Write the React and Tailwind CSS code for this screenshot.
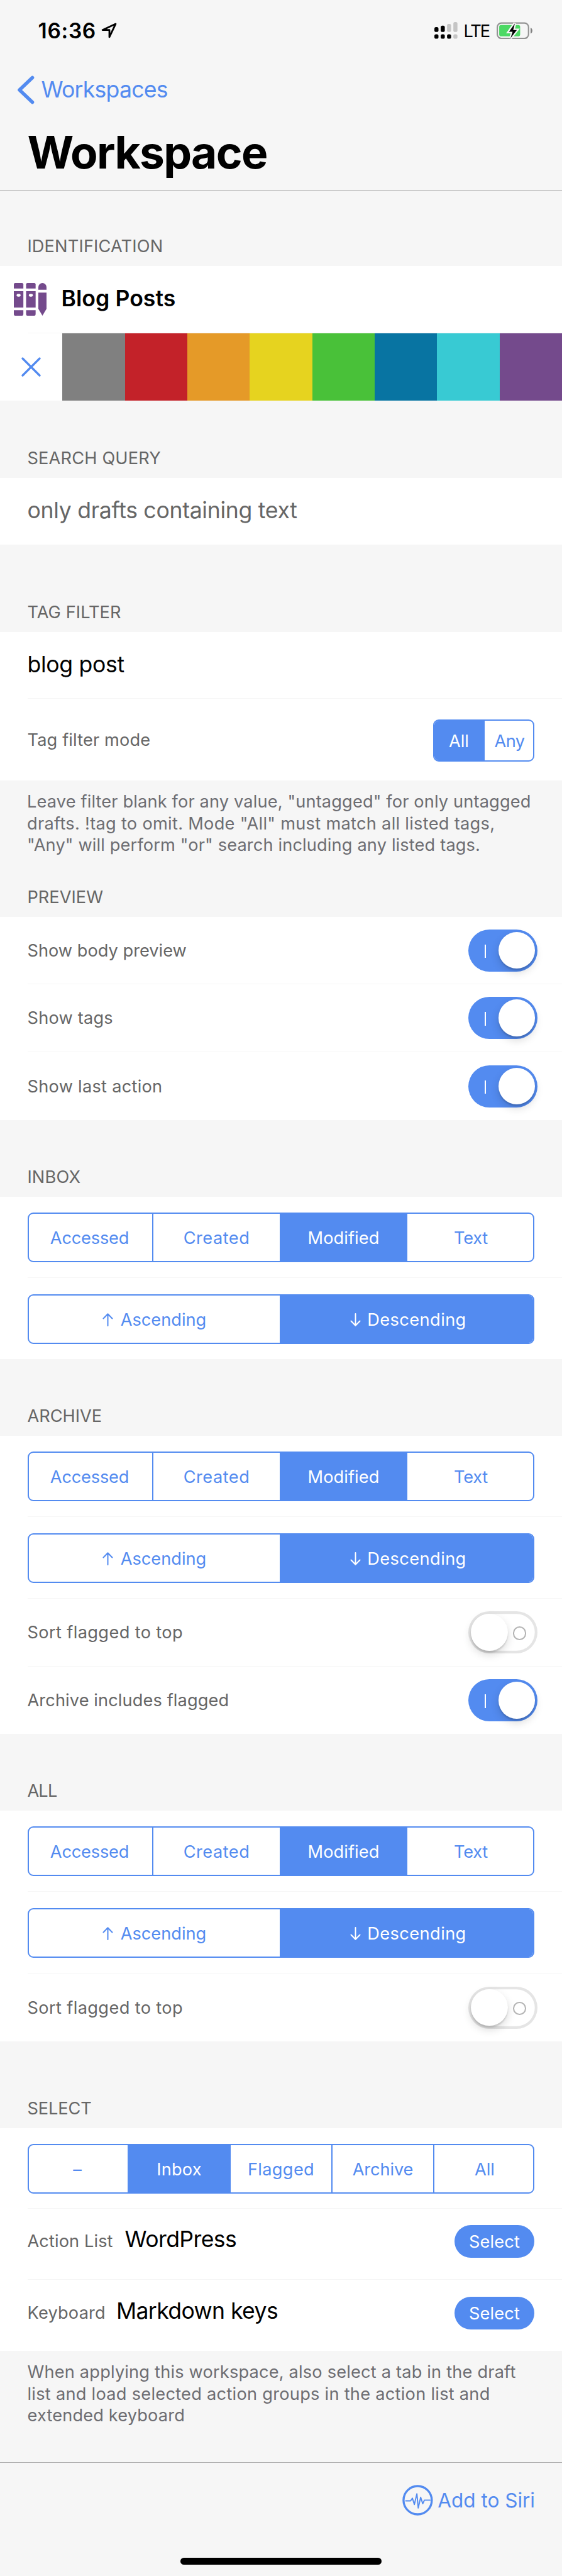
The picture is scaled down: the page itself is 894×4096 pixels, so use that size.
import React from "react";

const SWATCHES = [
  "bg-[#808080]",
  "bg-[#c32229]",
  "bg-[#e59a28]",
  "bg-[#e6d31f]",
  "bg-[#49c139]",
  "bg-[#0874a2]",
  "bg-[#38cad3]",
  "bg-[#744a8c]",
];

function LocationArrow() {
  return (
    <svg className="h-[25px] w-[25px]" viewBox="0 0 24 24" fill="none" stroke="black" strokeWidth="2.7" strokeLinejoin="round">
      <path d="M22 2 L2 11.200 H12.500 V22 Z" />
    </svg>
  );
}

function SignalDots() {
  return (
    <svg className="h-[26.6px] w-[36.7px]" viewBox="60 114 153 111">
      <g fill="#000">
        <rect x="60" y="147" width="27" height="33" rx="11" />
        <rect x="102" y="138" width="27" height="42" rx="11" />
        <rect x="60" y="195" width="27" height="30" rx="11" />
        <rect x="102" y="195" width="27" height="30" rx="11" />
        <rect x="144" y="195" width="27" height="30" rx="11" />
      </g>
      <g fill="#c5c5c5">
        <rect x="144" y="126" width="27" height="54" rx="11" />
        <rect x="186" y="114" width="27" height="66" rx="11" />
        <rect x="186" y="195" width="27" height="30" rx="11" />
      </g>
    </svg>
  );
}

function Battery() {
  return (
    <svg className="h-[27.6px] w-[57.6px]" viewBox="474 115 240 115">
      <rect x="478.500" y="121.500" width="207" height="102" rx="27" fill="none" stroke="#939393" strokeWidth="9" />
      <rect x="491" y="135" width="139" height="75" rx="13" fill="#4cd964" />
      <path d="M699 152 Q711 158 711 172.500 Q711 187 699 192 Z" fill="#808080" />
      <path d="M595 124 L555 180 H580 L566 222 L608 168 H584 Z" fill="#f6f6f6" stroke="#f6f6f6" strokeWidth="19" />
      <path d="M595 124 L556 180 H580 L566 222 L608 168 H584 Z" fill="#000" />
    </svg>
  );
}

function NotebooksIcon() {
  return (
    <svg className="h-[52px] w-[52px]" viewBox="33 42 216 216">
      <g fill="#744a8c">
        <path d="M33 78 V51 Q33 42 42 42 H87 Q96 42 96 51 V78 Z" />
        <rect x="33" y="96" width="63" height="108" />
        <path d="M33 222 V249 Q33 258 42 258 H87 Q96 258 96 249 V222 Z" />
        <path d="M114 78 V51 Q114 42 123 42 H168 Q177 42 177 51 V78 Z" />
        <rect x="114" y="96" width="63" height="108" />
        <path d="M114 222 V249 Q114 258 123 258 H168 Q177 258 177 249 V222 Z" />
        <path d="M195 87 V69 A27 27 0 0 1 249 69 V87 Z" />
        <path d="M195 105 H249 V212 L222 258 L195 212 Z" />
      </g>
      <rect x="51" y="114" width="27" height="18" rx="9" fill="#fff" />
      <rect x="132" y="114" width="27" height="18" rx="9" fill="#fff" />
    </svg>
  );
}

function SiriIcon() {
  return (
    <svg className="h-[49px] w-[49px]" viewBox="66 61 203 205" fill="none" stroke="#538bf0" strokeLinecap="round" strokeLinejoin="round">
      <circle cx="167" cy="163.500" r="94" strokeWidth="14" />
      <path d="M88 168 H120 L132 150 L145 192 L162 121 L171 215 L187 144 L201 187 L212 163 H249" strokeWidth="8" />
    </svg>
  );
}

function Arrow({ down }) {
  return (
    <svg className="h-[21px] w-[17px]" viewBox="0 0 17 21" fill="none" stroke="currentColor" strokeWidth="2" strokeLinecap="round" strokeLinejoin="round">
      {down ? <path d="M8.500 1 V19.500 M1.500 12.500 L8.500 19.700 L15.500 12.500" /> : <path d="M8.500 20 V1.500 M1.500 8.500 L8.500 1.300 L15.500 8.500" />}
    </svg>
  );
}

function SectionTitle({ children, className }) {
  return (
    <h2 className={"flex items-end pb-[15.4px] pl-[43.4px] text-[27.2px] leading-[33px] text-[#666] " + className}>
      <span>{children}</span>
    </h2>
  );
}

/* Hairline between two rows, inset on the left */
function Row({ className, last, children }) {
  return (
    <div className={"flex flex-col " + className}>
      <div className="flex min-h-0 grow items-center pl-11">{children}</div>
      <div className={last ? "h-0" : "ml-11 h-px shrink-0 bg-[#f6f6f6]"} />
    </div>
  );
}

function Toggle({ on }) {
  if (on) {
    return (
      <div className="relative mr-[39px] ml-auto h-[67px] w-[110px] shrink-0 rounded-full bg-[#538bf0]">
        <div className="absolute top-[24px] left-[26px] h-[21.5px] w-[2.2px] bg-white" />
        <div className="absolute top-[4.3px] left-[47.5px] size-[58.500px] rounded-full bg-white shadow-[0_6px_14px_rgba(0,0,0,0.15),0_3px_2px_rgba(0,0,0,0.12)]" />
      </div>
    );
  }
  return (
    <div className="relative mr-[39px] ml-auto h-[67px] w-[110px] shrink-0 rounded-full bg-white shadow-[inset_0_0_0_4.3px_#e5e5e5]">
      <div className="absolute top-[24px] left-[70.600px] size-[21.5px] rounded-full border-[2.6px] border-[#b2b2b2]" />
      <div className="absolute top-[4.3px] left-[4.3px] size-[58.500px] rounded-full bg-white shadow-[0_6px_14px_rgba(0,0,0,0.15),0_3px_2px_rgba(0,0,0,0.12)]" />
    </div>
  );
}

function ToggleRow({ label, tracking, on, last, className }) {
  return (
    <Row className={className} last={last}>
      <span className={"-ml-[0.5px] text-[27.2px] leading-[33px] text-[#666] " + tracking}>{label}</span>
      <Toggle on={on} />
    </Row>
  );
}

function Segment({ className, selected, children }) {
  return (
    <div
      className={
        "flex shrink-0 items-center justify-center pt-px " +
        (selected ? "bg-[#538bf0] text-white " : "text-[#538bf0] ") +
        className
      }
    >
      {children}
    </div>
  );
}

function SegmentGroup({ className, children }) {
  return (
    <div className={"flex shrink-0 overflow-hidden rounded-[9px] border-2 border-[#538bf0] bg-white text-[27.2px] leading-[33px] " + className}>
      {children}
    </div>
  );
}

function SortField() {
  return (
    <SegmentGroup className="mt-px h-[79px] w-[806px]">
      <Segment className="w-[198px] border-r-2 border-[#538bf0] pr-[3px] tracking-[-0.2px]">Accessed</Segment>
      <Segment className="w-[201px] tracking-[0.5px]">Created</Segment>
      <Segment className="w-[203px] tracking-[0.08px]" selected>Modified</Segment>
      <Segment className="w-[200px] pl-[2px] tracking-[-0.25px]">Text</Segment>
    </SegmentGroup>
  );
}

function SortOrder() {
  return (
    <SegmentGroup className="mt-[2px] h-[79px] w-[806px]">
      <Segment className="w-[399px] gap-[12px]">
        <Arrow />
        <span>Ascending</span>
      </Segment>
      <Segment className="w-[403px] gap-[10px] pl-[6px] tracking-[0.42px]" selected>
        <Arrow down />
        <span>Descending</span>
      </Segment>
    </SegmentGroup>
  );
}

function PickerRow({ label, value, labelClass, valueClass, last }) {
  return (
    <Row className="h-[113px]" last={last}>
      <div className="mb-[11px] -ml-[0.5px] flex items-baseline leading-10">
        <span className={"text-[27.2px] text-[#666] " + labelClass}>{label}</span>
        <span className={"text-[35.6px] tracking-[-0.6px] text-black " + valueClass}>{value}</span>
      </div>
      <button className="mr-11 mb-[8px] ml-auto h-[52px] w-[127px] shrink-0 rounded-full bg-[#538bf0] text-center text-[27.2px] leading-[53px] tracking-[0.13px] text-white">
        Select
      </button>
    </Row>
  );
}

export default function App() {
  return (
    <div className="flex h-[4096px] w-[894px] flex-col overflow-hidden bg-[#f6f6f6] font-['Inter',sans-serif]">
      <header className="flex h-[303px] shrink-0 flex-col border-b border-[#b0b0b0]">
        <div className="flex h-[97px] items-center pr-[46px] pl-[60.600px]">
          <span className="text-[33.500px] leading-10 font-semibold tracking-[0.67px] text-black">16:36</span>
          <div className="ml-[8px]">
            <LocationArrow />
          </div>
          <div className="ml-auto flex items-center">
            <SignalDots />
            <span className="mt-[2px] ml-[9.400px] w-[41px] text-[27.2px] leading-[33px] tracking-[-2px] whitespace-nowrap text-black">LTE</span>
            <div className="ml-[12px]">
              <Battery />
            </div>
          </div>
        </div>
        <nav className="flex h-[91px] items-center pl-[27px] text-[#538bf0]">
          <svg className="h-[46px] w-[28px]" viewBox="0 0 28 46" fill="none" stroke="currentColor" strokeWidth="5.600" strokeLinecap="round" strokeLinejoin="round">
            <path d="M24.500 3.500 L4 23 L24.500 42.500" />
          </svg>
          <span className="ml-[10.500px] pt-px text-[35.6px] leading-10 tracking-[-0.76px]">Workspaces</span>
        </nav>
        <h1 className="flex h-[108px] items-center pt-px pl-[43.500px] text-[71.2px] leading-none font-bold tracking-[-1.7px] text-black">Workspace</h1>
      </header>

      <SectionTitle className="h-[120px] tracking-[0.15px]">IDENTIFICATION</SectionTitle>
      <div className="bg-white">
        <div className="flex h-[106px] items-center pl-[22px]">
          <NotebooksIcon />
          <span className="mb-[2px] ml-[23.500px] text-[35.6px] leading-10 font-semibold tracking-[0.05px] text-black">Blog Posts</span>
        </div>
        <div className="ml-11 h-px bg-[#f4f4f4]" />
        <div className="grid h-[107px] grid-cols-9">
          <div className="flex items-center justify-center">
            <svg className="h-[31px] w-[31px]" viewBox="0 0 31 31" stroke="#538bf0" strokeWidth="3.300" strokeLinecap="round">
              <path d="M2 2 L29 29 M29 2 L2 29" />
            </svg>
          </div>
          {SWATCHES.map((color) => (
            <div key={color} className={color} />
          ))}
        </div>
      </div>

      <SectionTitle className="h-[123px] tracking-[0.18px]">SEARCH QUERY</SectionTitle>
      <div className="bg-white">
        <Row className="h-[106px]" last>
          <span className="mb-[2px] -ml-[0.5px] text-[35.6px] leading-10 tracking-[-0.29px] text-[#666]">only drafts containing text</span>
        </Row>
      </div>

      <SectionTitle className="h-[139px] tracking-[0.07px]">TAG FILTER</SectionTitle>
      <div className="bg-white">
        <Row className="h-[106px]">
          <span className="mb-[2px] -ml-[0.5px] text-[35.6px] leading-10 tracking-[-0.32px] text-black">blog post</span>
        </Row>
        <Row className="h-[130px]" last>
          <span className="-ml-[0.5px] pt-px text-[27.2px] leading-[33px] tracking-[0.13px] text-[#666]">Tag filter mode</span>
          <SegmentGroup className="mt-[3px] mr-11 ml-auto h-[67px] w-[161px]">
            <Segment className="w-[80px] pr-[2px]" selected>All</Segment>
            <Segment className="w-[77px] pl-[2px] tracking-[-0.6px]">Any</Segment>
          </SegmentGroup>
        </Row>
      </div>
      <p className="h-[121px] pt-[17px] pl-[43px] text-[27.2px] leading-[34.56px] whitespace-nowrap text-[#6d6d72]">
        <span className="tracking-[0.147px]">Leave filter blank for any value, "untagged" for only untagged</span>
        <br />
        <span className="tracking-[0.29px]">drafts. !tag to omit. Mode "All" must match all listed tags,</span>
        <br />
        <span className="tracking-[0.148px]">"Any" will perform "or" search including any listed tags.</span>
      </p>

      <SectionTitle className="h-[96px] tracking-[0.03px]">PREVIEW</SectionTitle>
      <div className="bg-white">
        <ToggleRow className="h-[107px]" label="Show body preview" tracking="tracking-[0.01px]" on />
        <ToggleRow className="h-[108px]" label="Show tags" tracking="tracking-[0.2px]" on />
        <ToggleRow className="h-[108px]" label="Show last action" tracking="tracking-[0.27px]" on last />
      </div>

      <SectionTitle className="h-[122px] tracking-[0.15px]">INBOX</SectionTitle>
      <div className="bg-white">
        <Row className="h-[129px]"><SortField /></Row>
        <Row className="h-[129px]" last><SortOrder /></Row>
      </div>

      <SectionTitle className="h-[122px]">ARCHIVE</SectionTitle>
      <div className="bg-white">
        <Row className="h-[129px]"><SortField /></Row>
        <Row className="h-[130px]"><SortOrder /></Row>
        <ToggleRow className="h-[108px]" label="Sort flagged to top" tracking="tracking-[0.37px]" />
        <ToggleRow className="h-[107px]" label="Archive includes flagged" tracking="tracking-[0.11px]" on last />
      </div>

      <SectionTitle className="h-[122px] tracking-[-0.8px]">ALL</SectionTitle>
      <div className="bg-white">
        <Row className="h-[129px]"><SortField /></Row>
        <Row className="h-[130px]"><SortOrder /></Row>
        <ToggleRow className="h-[108px]" label="Sort flagged to top" tracking="tracking-[0.37px]" last />
      </div>

      <SectionTitle className="h-[138px] tracking-[-0.1px]">SELECT</SectionTitle>
      <div className="bg-white">
        <Row className="h-[128px]">
          <SegmentGroup className="mt-[2px] h-[79px] w-[806px]">
            <Segment className="w-[157px] pr-[3px]">–</Segment>
            <Segment className="w-[164px] tracking-[0.17px]" selected>Inbox</Segment>
            <Segment className="w-[162px] border-r-2 border-[#538bf0] tracking-[0.35px]">Flagged</Segment>
            <Segment className="w-[162px] border-r-2 border-[#538bf0] tracking-[-0.1px]">Archive</Segment>
            <Segment className="w-[157px] pl-[3px]">All</Segment>
          </SegmentGroup>
        </Row>
        <PickerRow label="Action List" value="WordPress" labelClass="tracking-[0.1px]" valueClass="ml-[19px]" />
        <PickerRow label="Keyboard" value="Markdown keys" labelClass="tracking-[0.2px]" valueClass="ml-[17px]" last />
      </div>
      <p className="h-[177px] pt-[17px] pl-[43.500px] text-[27.2px] leading-[34.56px] whitespace-nowrap text-[#6d6d72]">
        <span className="tracking-[0.186px]">When applying this workspace, also select a tab in the draft</span>
        <br />
        <span className="tracking-[0.27px]">list and load selected action groups in the action list and</span>
        <br />
        <span className="tracking-[0.152px]">extended keyboard</span>
      </p>

      <footer className="flex grow flex-col items-center border-t border-[#b0b0b0]">
        <div className="flex h-[118px] w-full items-center justify-end pr-[43px] text-[#538bf0]">
          <SiriIcon />
          <span className="ml-[7.500px] pt-px text-[31.500px] leading-10">Add to Siri</span>
        </div>
        <div className="mt-[33px] h-[11px] w-[320px] rounded-full bg-black" />
      </footer>
    </div>
  );
}
